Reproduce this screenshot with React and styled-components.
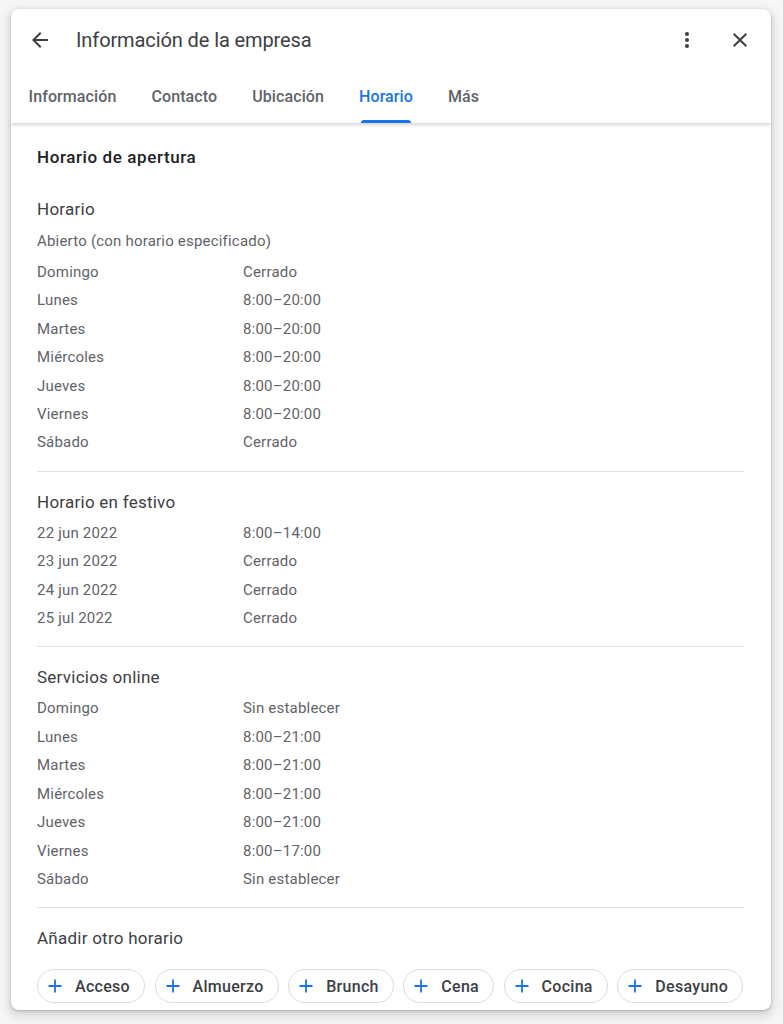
import styled, { createGlobalStyle } from "styled-components";

const GlobalStyle = createGlobalStyle`
  html, body {
    margin: 0;
    padding: 0;
    background: #f6f6f6;
    font-family: Roboto, "Noto Sans", Arial, sans-serif;
    -webkit-font-smoothing: antialiased;
  }
`;

const Page = styled.div`
  width: 783px;
  height: 1024px;
  padding: 9px 12px 0 11px;
  box-sizing: border-box;
  overflow: hidden;
`;

const Dialog = styled.div`
  height: 1001px;
  background: #fff;
  border-radius: 8px;
  box-shadow: 0 1px 3px rgba(60, 64, 67, 0.3), 0 4px 8px 3px rgba(60, 64, 67, 0.15);
  display: flex;
  flex-direction: column;
  overflow: hidden;
`;

const Header = styled.div`
  position: relative;
  z-index: 1;
  box-shadow: 0 2px 3px rgba(60, 64, 67, 0.22);
`;

const TopBar = styled.div`
  height: 62px;
  display: flex;
  align-items: center;
  padding: 0 19px 0 17px;
`;

const IconButton = styled.button`
  width: 24px;
  height: 24px;
  padding: 0;
  border: none;
  background: none;
  display: flex;
  align-items: center;
  justify-content: center;
  color: #3c4043;
  margin-left: ${(p) => p.$ml || 0}px;
  cursor: pointer;
`;

const Title = styled.h1`
  flex: 1;
  margin: 0 0 0 24px;
  font-size: 20px;
  font-weight: 400;
  color: #3c4043;
  letter-spacing: -0.1px;
`;

const Tabs = styled.div`
  display: flex;
  height: 52px;
`;

const Tab = styled.div`
  position: relative;
  padding: 0 17.5px 2px;
  display: flex;
  align-items: center;
  font-size: 16px;
  font-weight: 500;
  color: ${(p) => (p.$active ? "#1a73e8" : "#5f6368")};
  letter-spacing: 0.1px;
`;

const Indicator = styled.span`
  position: absolute;
  left: 19px;
  right: 19px;
  bottom: 0;
  height: 3px;
  border-radius: 3px 3px 0 0;
  background: #1a73e8;
`;

const Body = styled.div`
  flex: 1;
  overflow: hidden;
  padding: 22px 27px 0 26px;
`;

const PageTitle = styled.h2`
  margin: 0 0 28px;
  font-size: 17px;
  line-height: 24px;
  font-weight: 500;
  color: #202124;
  letter-spacing: 0.6px;
`;

const Section = styled.section`
  padding-bottom: 14px;
  border-bottom: ${(p) => (p.$last ? "none" : "1px solid #e0e0e0")};
  margin-bottom: 18px;
`;

const SectionTitle = styled.h3`
  margin: 0 0 5px;
  font-size: 17px;
  line-height: 24px;
  font-weight: 400;
  color: #3c4043;
  letter-spacing: 0.25px;
`;

const Note = styled.div`
  font-size: 15px;
  line-height: 30px;
  color: #5f6368;
  letter-spacing: 0.2px;
  margin-bottom: 2px;
`;

const Row = styled.div`
  display: grid;
  grid-template-columns: 206px 1fr;
  font-size: 15px;
  line-height: 28.4px;
  color: #5f6368;
  letter-spacing: 0.2px;
`;

const Chips = styled.div`
  display: flex;
  gap: 9.5px;
  margin-top: 19px;
`;

const Chip = styled.button`
  height: 34px;
  display: flex;
  align-items: center;
  gap: 11px;
  padding: 0 14px 0 8px;
  border: 1px solid #dadce0;
  border-radius: 17px;
  background: #fff;
  font-family: inherit;
  font-size: 16px;
  font-weight: 500;
  color: #3c4043;
  letter-spacing: 0.3px;
  cursor: pointer;
`;

const BackIcon = () => (
  <svg width="24" height="24" viewBox="0 0 24 24" fill="currentColor">
    <path d="M20 11H7.83l5.59-5.59L12 4l-8 8 8 8 1.41-1.41L7.83 13H20v-2z" />
  </svg>
);

const MoreIcon = () => (
  <svg width="24" height="24" viewBox="0 0 24 24" fill="currentColor">
    <circle cx="12" cy="6" r="2" />
    <circle cx="12" cy="12" r="2" />
    <circle cx="12" cy="18" r="2" />
  </svg>
);

const CloseIcon = () => (
  <svg width="24" height="24" viewBox="0 0 24 24" fill="currentColor">
    <path d="M19 6.41 17.59 5 12 10.59 6.41 5 5 6.41 10.59 12 5 17.59 6.41 19 12 13.41 17.59 19 19 17.59 13.41 12z" />
  </svg>
);

const PlusIcon = () => (
  <svg width="18" height="18" viewBox="0 0 18 18">
    <path d="M9 2.5v13M2.5 9h13" stroke="#1a73e8" strokeWidth="1.8" fill="none" />
  </svg>
);

const tabs = ["Información", "Contacto", "Ubicación", "Horario", "Más"];

const regular = [
  ["Domingo", "Cerrado"],
  ["Lunes", "8:00–20:00"],
  ["Martes", "8:00–20:00"],
  ["Miércoles", "8:00–20:00"],
  ["Jueves", "8:00–20:00"],
  ["Viernes", "8:00–20:00"],
  ["Sábado", "Cerrado"],
];

const holidays = [
  ["22 jun 2022", "8:00–14:00"],
  ["23 jun 2022", "Cerrado"],
  ["24 jun 2022", "Cerrado"],
  ["25 jul 2022", "Cerrado"],
];

const online = [
  ["Domingo", "Sin establecer"],
  ["Lunes", "8:00–21:00"],
  ["Martes", "8:00–21:00"],
  ["Miércoles", "8:00–21:00"],
  ["Jueves", "8:00–21:00"],
  ["Viernes", "8:00–17:00"],
  ["Sábado", "Sin establecer"],
];

const extra = ["Acceso", "Almuerzo", "Brunch", "Cena", "Cocina", "Desayuno"];

const Rows = ({ items }) =>
  items.map(([label, value]) => (
    <Row key={label}>
      <span>{label}</span>
      <span>{value}</span>
    </Row>
  ));

const App = () => {
  return (
    <Page>
      <GlobalStyle />
      <Dialog>
        <Header>
          <TopBar>
            <IconButton>
              <BackIcon />
            </IconButton>
            <Title>Información de la empresa</Title>
            <IconButton>
              <MoreIcon />
            </IconButton>
            <IconButton $ml={29}>
              <CloseIcon />
            </IconButton>
          </TopBar>
          <Tabs>
            {tabs.map((t) => (
              <Tab key={t} $active={t === "Horario"}>
                {t}
                {t === "Horario" && <Indicator />}
              </Tab>
            ))}
          </Tabs>
        </Header>
        <Body>
          <PageTitle>Horario de apertura</PageTitle>
          <Section>
            <SectionTitle>Horario</SectionTitle>
            <Note>Abierto (con horario especificado)</Note>
            <Rows items={regular} />
          </Section>
          <Section>
            <SectionTitle>Horario en festivo</SectionTitle>
            <Rows items={holidays} />
          </Section>
          <Section>
            <SectionTitle>Servicios online</SectionTitle>
            <Rows items={online} />
          </Section>
          <Section $last>
            <SectionTitle>Añadir otro horario</SectionTitle>
            <Chips>
              {extra.map((c) => (
                <Chip key={c}>
                  <PlusIcon />
                  {c}
                </Chip>
              ))}
            </Chips>
          </Section>
        </Body>
      </Dialog>
    </Page>
  );
};

export default App;
